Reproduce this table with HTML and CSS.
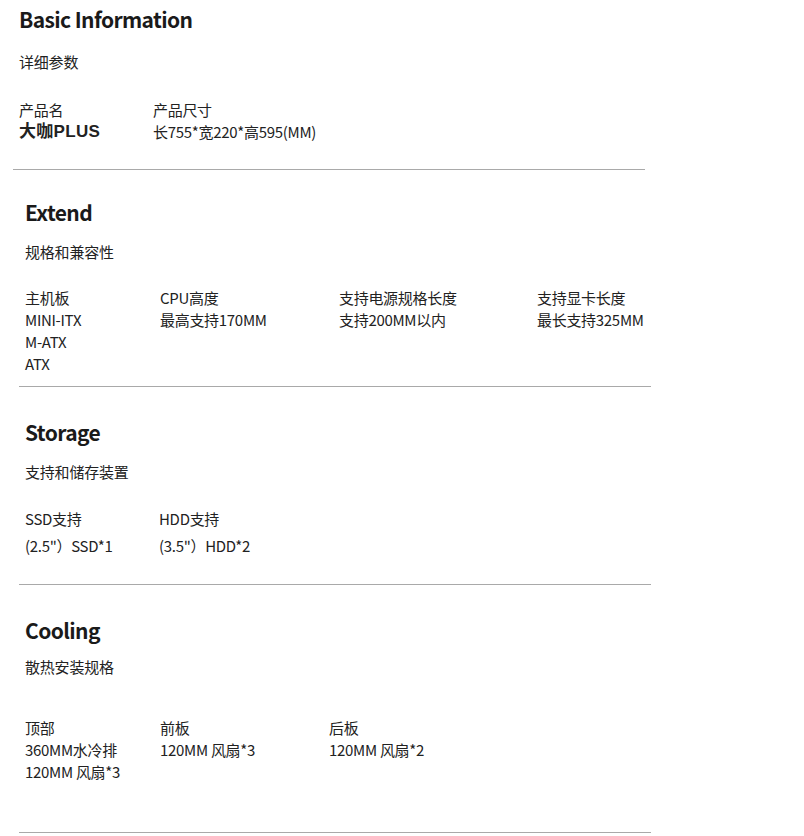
FILE: index.html
```html
<!DOCTYPE html>
<html>
<head>
  <meta charset="UTF-8">
  <title>大咖PLUS - 详细参数</title>
  <link rel="stylesheet" href="styles.css">
</head>
<body>
  <section class="section section-basic">
    <h2>Basic Information</h2>
    <p class="subtitle">详细参数</p>
    <div class="specs">
      <div class="spec">
        <div>产品名</div>
        <div class="product-name">大咖PLUS</div>
      </div>
      <div class="spec">
        <div>产品尺寸</div>
        <div>长755*宽220*高595(MM)</div>
      </div>
    </div>
  </section>

  <section class="section section-extend">
    <h2>Extend</h2>
    <p class="subtitle">规格和兼容性</p>
    <div class="specs">
      <div class="spec">
        <div>主机板</div>
        <div>MINI-ITX</div>
        <div>M-ATX</div>
        <div>ATX</div>
      </div>
      <div class="spec">
        <div>CPU高度</div>
        <div>最高支持170MM</div>
      </div>
      <div class="spec">
        <div>支持电源规格长度</div>
        <div>支持200MM以内</div>
      </div>
      <div class="spec">
        <div>支持显卡长度</div>
        <div>最长支持325MM</div>
      </div>
    </div>
  </section>

  <section class="section section-storage">
    <h2>Storage</h2>
    <p class="subtitle">支持和储存装置</p>
    <div class="specs">
      <div class="spec">
        <div>SSD支持</div>
        <div>(2.5"）SSD*1</div>
      </div>
      <div class="spec">
        <div>HDD支持</div>
        <div>(3.5"）HDD*2</div>
      </div>
    </div>
  </section>

  <section class="section section-cooling">
    <h2>Cooling</h2>
    <p class="subtitle">散热安装规格</p>
    <div class="specs">
      <div class="spec">
        <div>顶部</div>
        <div>360MM水冷排</div>
        <div>120MM 风扇*3</div>
      </div>
      <div class="spec">
        <div>前板</div>
        <div>120MM 风扇*3</div>
      </div>
      <div class="spec">
        <div>后板</div>
        <div>120MM 风扇*2</div>
      </div>
    </div>
  </section>
</body>
</html>
```

FILE: styles.css
```css
body {
  margin: 0;
  background-color: #ffffff;
  color: #222222;
  font-family: "Noto Sans CJK SC", "Noto Sans", sans-serif;
  font-size: 15px;
}
.section {
  width: 632px;
  margin-left: 19px;
  padding-left: 6px;
  box-sizing: border-box;
  border-bottom: 1px solid #a9a9a9;
}
h2 {
  margin: 0;
  font-size: 21px;
  line-height: 30px;
  font-weight: 700;
  letter-spacing: -0.6px;
  color: #1a1a1a;
}
.subtitle {
  margin: 0;
  line-height: 22px;
  letter-spacing: -0.2px;
}
.specs {
  display: grid;
}
.spec div {
  line-height: 22px;
  letter-spacing: -0.3px;
  white-space: nowrap;
}
.spec .product-name {
  font-family: "Liberation Sans", "Noto Sans CJK SC", sans-serif;
  font-weight: 700;
  font-size: 17px;
  letter-spacing: 0.3px;
}

/* Basic Information */
.section-basic {
  margin-left: 13px;
  padding-top: 4px;
  padding-bottom: 26px;
}
.section-basic .subtitle {
  margin-top: 17px;
}
.section-basic .specs {
  margin-top: 26px;
  grid-template-columns: 134px auto;
}

/* Extend */
.section-extend {
  padding-top: 27px;
  padding-bottom: 11px;
}
.section-extend .subtitle {
  margin-top: 14px;
}
.section-extend .specs {
  margin-top: 24px;
  grid-template-columns: 135px 179px 198px auto;
}

/* Storage */
.section-storage {
  padding-top: 30px;
  padding-bottom: 25px;
}
.section-storage .subtitle {
  margin-top: 14px;
}
.section-storage .specs {
  margin-top: 22px;
  grid-template-columns: 134px auto;
}
.section-storage .spec div {
  line-height: 27px;
}

/* Cooling */
.section-cooling {
  padding-top: 30px;
  padding-bottom: 49px;
}
.section-cooling .subtitle {
  margin-top: 11px;
}
.section-cooling .specs {
  margin-top: 39px;
  grid-template-columns: 135px 169px auto;
}
```
